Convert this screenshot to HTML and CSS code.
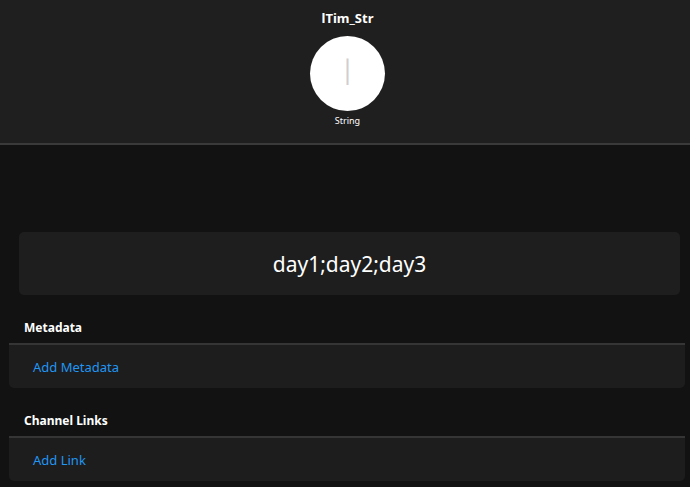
FILE: index.html
```html
<!DOCTYPE html>
<html lang="en">
<head>
<meta charset="UTF-8">
<meta name="viewport" content="width=device-width, initial-scale=1.0">
<title>lTim_Str</title>
<link rel="stylesheet" href="styles.css">
</head>
<body>

<div class="item-header">
    <div class="item-title">lTim_Str</div>
    <div class="item-icon">
        <span class="item-letter">l</span>
    </div>
    <div class="item-type">String</div>
</div>

<div class="item-body">
    <div class="state-card">
        <span class="state-value">day1;day2;day3</span>
    </div>

    <div class="block-title">Metadata</div>
    <div class="block-card">
        <a class="block-link" href="#">Add Metadata</a>
    </div>

    <div class="block-title">Channel Links</div>
    <div class="block-card">
        <a class="block-link" href="#">Add Link</a>
    </div>
</div>

</body>
</html>
```

FILE: styles.css
```css
body {
    font-family: "Noto Sans", "Open Sans", sans-serif;
    background-color: #121212;
    color: #fff;
    margin: 0;
}
.item-header {
    background-color: #1f1f1f;
    border-bottom: 2px solid #3a3a3a;
    height: 145px;
    box-sizing: border-box;
    display: flex;
    flex-direction: column;
    align-items: center;
    padding: 8px 0 0 5px;
}
.item-title {
    font-size: 13px;
    font-weight: bold;
    line-height: 20px;
}
.item-icon {
    width: 75px;
    height: 75px;
    margin-top: 8px;
    border-radius: 50%;
    background-color: #fff;
    display: flex;
    align-items: center;
    justify-content: center;
}
.item-letter {
    color: #cfcfcf;
    font-size: 34px;
    font-weight: 300;
    line-height: 1;
    margin-top: -4px;
}
.item-type {
    font-size: 9px;
    margin-top: 3px;
}
.item-body {
    padding: 87px 5px 0 9px;
}
.state-card {
    margin: 0 5px 0 10px;
    height: 63px;
    background-color: #1e1e1e;
    border-radius: 5px;
    display: flex;
    align-items: center;
    justify-content: center;
}
.state-value {
    font-size: 21px;
}
.block-title {
    font-size: 12px;
    font-weight: bold;
    padding: 24px 0 6px 15px;
    line-height: 18px;
}
.block-card {
    background-color: #1d1d1d;
    border-top: 2px solid #353535;
    border-radius: 0 0 5px 5px;
    height: 43px;
    display: flex;
    align-items: center;
    padding-left: 24px;
}
.block-link {
    color: #2196f3;
    text-decoration: none;
    font-size: 13px;
}
```
